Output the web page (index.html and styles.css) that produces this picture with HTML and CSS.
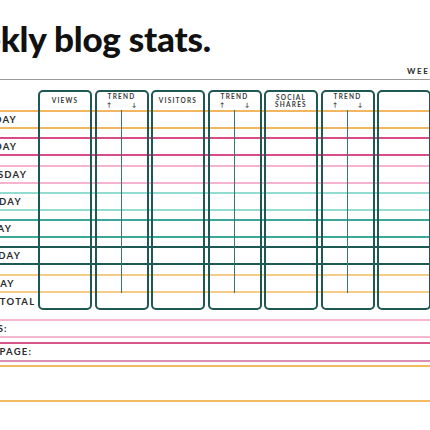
FILE: index.html
```html
<!DOCTYPE html>
<html lang="en">
<head>
  <meta charset="UTF-8" />
  <meta name="viewport" content="width=device-width, initial-scale=1.0"/>
  <title>Weekly blog stats</title>
  <link rel="stylesheet" href="styles.css">
</head>
<body>

  <div class="sheet">
    <header class="top">
      <h1 class="title">Weekly blog stats.</h1>
      <div class="week">WEEK OF:</div>
    </header>

    <section class="stats">
      <div class="day mon"><span>MONDAY</span></div>
      <div class="day tue"><span>TUESDAY</span></div>
      <div class="day wed"><span>WEDNESDAY</span></div>
      <div class="day thu"><span>THURSDAY</span></div>
      <div class="day fri"><span>FRIDAY</span></div>
      <div class="day sat"><span>SATURDAY</span></div>
      <div class="day sun"><span>SUNDAY</span></div>
      <div class="total">WEEKLY TOTAL</div>

      <div class="col c1"><div class="head">VIEWS</div></div>
      <div class="col c2 trend">
        <div class="head"><span>TREND</span><div class="arrows"><span>↑</span><span>↓</span></div></div>
        <div class="split"></div>
      </div>
      <div class="col c3"><div class="head">VISITORS</div></div>
      <div class="col c4 trend">
        <div class="head"><span>TREND</span><div class="arrows"><span>↑</span><span>↓</span></div></div>
        <div class="split"></div>
      </div>
      <div class="col c5"><div class="head">SOCIAL<br>SHARES</div></div>
      <div class="col c6 trend">
        <div class="head"><span>TREND</span><div class="arrows"><span>↑</span><span>↓</span></div></div>
        <div class="split"></div>
      </div>
      <div class="col c7"><div class="head"></div></div>
    </section>

    <section class="notes">
      <div class="note pink"><span>TOP REFERRERS:</span></div>
      <div class="note magenta"><span>MOST VIEWED PAGE:</span></div>
      <div class="note orange"></div>
    </section>
  </div>

</body>
</html>
```

FILE: styles.css
```css
* {
  box-sizing: border-box;
  margin: 0;
  padding: 0;
}

body {
  width: 430px;
  height: 430px;
  overflow: hidden;
  background: #fff;
  font-family: 'Lato', 'Open Sans', sans-serif;
  color: #2b2b2b;
}

.sheet {
  width: 620px;
  margin-left: -80px;
}

/* title bar */
.top {
  display: grid;
  grid-template-columns: 487px 1fr;
  align-items: end;
  padding-top: 18px;
  border-bottom: 1.5px solid #9b9b9b;
}

.title {
  padding-left: 9px;
  margin-bottom: 20px;
  font-size: 35px;
  line-height: 41px;
  font-weight: 900;
  color: #111;
  letter-spacing: -0.2px;
  white-space: nowrap;
}

.week {
  margin-bottom: 3px;
  font-size: 8px;
  line-height: 10px;
  font-weight: 700;
  letter-spacing: 1.6px;
  white-space: nowrap;
}

/* stats table */
.stats {
  display: grid;
  grid-template-columns: 91.5px repeat(7, 54px);
  grid-template-rows: 20px repeat(6, 27.3px) 19px 17px;
  column-gap: 2.5px;
  margin: 10px 0 0 24px;
}

.day {
  grid-column: 1 / -1;
  align-self: start;
  height: 19px;
  display: flex;
  align-items: center;
  border-top: 2px solid;
  border-bottom: 2px solid;
}

.day span,
.total {
  width: 91.5px;
  padding-left: 4px;
  text-align: center;
  font-size: 9.5px;
  font-weight: 700;
  letter-spacing: 1.2px;
  white-space: nowrap;
}

.mon { grid-row: 2; border-color: #f2b661; }
.tue { grid-row: 3; border-color: #d94b86; }
.wed { grid-row: 4; border-color: #f5b3cf; }
.thu { grid-row: 5; border-color: #93dcd1; }
.fri { grid-row: 6; border-color: #3ba899; }
.sat { grid-row: 7; border-color: #1d5a55; }
.sun { grid-row: 8; border-color: #f5cb88; }

.total {
  grid-row: 9;
  grid-column: 1;
  align-self: center;
  padding-left: 8px;
}

.col {
  grid-row: 1 / -1;
  display: flex;
  flex-direction: column;
  align-items: center;
  border: 2px solid #1e5852;
  border-radius: 5px;
  z-index: 1;
}

.c1 { grid-column: 2; }
.c2 { grid-column: 3; }
.c3 { grid-column: 4; }
.c4 { grid-column: 5; }
.c5 { grid-column: 6; }
.c6 { grid-column: 7; }
.c7 { grid-column: 8; }

.head {
  width: 100%;
  height: 18px;
  display: flex;
  flex-direction: column;
  justify-content: center;
  align-items: center;
  font-size: 6.5px;
  line-height: 7.5px;
  font-weight: 700;
  letter-spacing: 1.2px;
  text-align: center;
  color: #3a3a3a;
}

.trend .head {
  justify-content: flex-start;
  padding-top: 1px;
}

.arrows {
  width: 100%;
  display: flex;
  font-size: 6px;
  line-height: 7px;
  letter-spacing: 0;
}

.arrows span {
  flex: 1;
  text-align: center;
}

.split {
  height: 183px;
  border-left: 1.5px solid #3a7670;
}

/* notes under the table */
.notes {
  margin-top: 9px;
}

.note {
  height: 19px;
  display: flex;
  align-items: center;
  border-top: 2px solid;
  border-bottom: 2px solid;
  font-size: 9.5px;
  font-weight: 700;
  letter-spacing: 1.2px;
}

.note span {
  margin-left: -4px;
}

.pink {
  border-color: #f4b8d1;
}

.magenta {
  height: 20px;
  margin-top: 4px;
  border-top-color: #d9558e;
  border-bottom-color: #d98fb4;
}

.orange {
  height: 37px;
  margin-top: 3px;
  border-color: #f2bb62;
}
```
